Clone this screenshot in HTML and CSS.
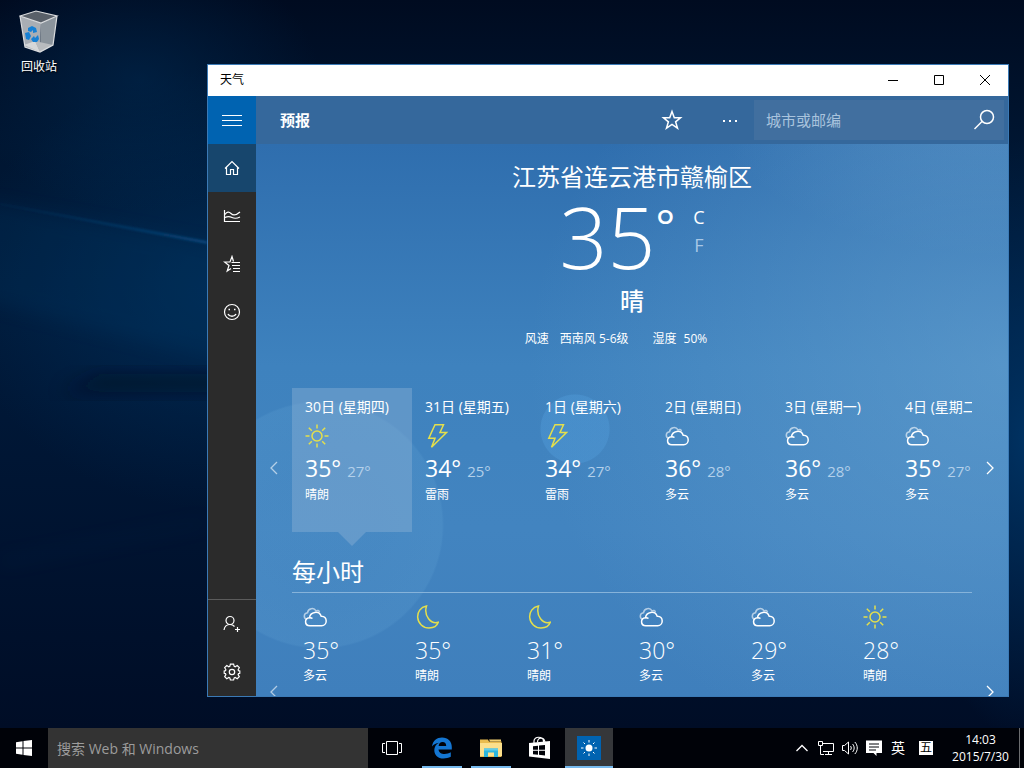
FILE: index.html
```html
<!DOCTYPE html>
<html lang="zh-CN">
<head>
<meta charset="utf-8">
<title>天气</title>
<link rel="stylesheet" href="styles.css">
</head>
<body>
<svg class="defs" aria-hidden="true">
  <symbol id="sun" viewBox="0 0 24 24"><circle cx="12" cy="12" r="5"/><path d="M12 .5v4M12 19.500v4M.5 12h4M19.500 12h4M3.800 3.800l3 3M17.200 17.200l3 3M3.800 20.200l3-3M17.200 6.800l3-3"/></symbol>
  <symbol id="bolt" viewBox="0 0 24 24"><path d="M10 .8h8.500L15 8.500h6.500L6.500 23.200l3.500-9H3.800z"/></symbol>
  <symbol id="moon" viewBox="0 0 24 24"><path d="M11.500 1C5.500 2.200 2.300 7 2.700 12.500 3.200 18.500 8 23 14 23c4.500 0 8-2 9.300-5.700C16 19.500 8.500 11 11.500 1z"/></symbol>
  <symbol id="cloud" viewBox="0 0 24 24"><path class="back" d="M4 14.500C.3 13.500.3 8.500 4.500 7.800 5 3 11 2.200 13 5.800c1.500-.8 3-.3 3.500 1.200"/><path d="M6.800 20.700c-5.500 0-5.700-7.500-.3-8 .8-6 9.500-7.500 11.700-1.500 3.300-.2 5 2 5 4.700 0 2.800-2 4.800-4.500 4.800z"/><path d="M6.500 12.700c1.300-.1 2.200.1 3 .8"/></symbol>
  <symbol id="left" viewBox="0 0 12 16"><path d="M9 2L3 8 9 14"/></symbol>
  <symbol id="right" viewBox="0 0 12 16"><path d="M3 2L9 8 3 14"/></symbol>
</svg>

<div class="desktop">
  <svg class="wallpaper" viewBox="0 0 1024 728" preserveAspectRatio="none" aria-hidden="true">
    <defs>
      <linearGradient id="beam" x1="0" x2="1"><stop offset="0" stop-color="#0a4a80" stop-opacity=".1"/><stop offset="1" stop-color="#1262a4" stop-opacity=".5"/></linearGradient>
      <filter id="soft" x="-20%" y="-50%" width="140%" height="200%"><feGaussianBlur stdDeviation="9"/></filter>
      <filter id="fine"><feGaussianBlur stdDeviation="1"/></filter>
    </defs>
    <path d="M-20 200L240 250V366L-20 300z" fill="#04406f" opacity=".2" filter="url(#soft)"/>
    <path d="M100 374h140v18H60z" fill="#000a1c" opacity=".5" filter="url(#soft)"/>
    <path d="M0 203L207 241v3L0 205z" fill="url(#beam)" filter="url(#fine)"/>
    <path d="M0 560L207 520v4L0 565z" fill="#0a3c68" opacity=".2" filter="url(#soft)"/>
  </svg>
  <button class="shortcut">
    <svg width="40" height="44" viewBox="0 0 40 44" aria-hidden="true">
      <path d="M1 7L17 2l21 5-16 7z" fill="#596069"/>
      <path d="M1 7l21 7-1 29L6 38z" fill="#a9aeb4"/>
      <path d="M22 14l16-7-4 29-13 7z" fill="#8b949c"/>
      <path d="M5 36l11-4 5 11z" fill="#d6d7d8"/><path d="M16 32l5 11 13-7z" fill="#b8bbbe"/>
      <path d="M1 7l16-5 21 5-16 7zM1 7l5 31 15 5 13-7 4-29" fill="none" stroke="#dadcde" stroke-width="1.200"/>
      <path d="M9 19l4-2 4 2 1 4-4 1 0-3-2 2-3-1zM6 24l4-1 2 4-2 4-3-1zM12 30l3-3 1 2 3-3 1 4-2 3-4 0z" fill="#1680d4"/>
    </svg>
    <span>回收站</span>
  </button>

  <section class="window" aria-label="天气">
    <header class="titlebar">
      <span class="caption">天气</span>
      <button aria-label="最小化"><svg width="12" height="12"><path d="M1 5.500h10"/></svg></button>
      <button aria-label="最大化"><svg width="12" height="12"><path d="M1.500.5h9v9h-9z"/></svg></button>
      <button aria-label="关闭"><svg width="12" height="12"><path d="M1 0l10 10M11 0L1 10"/></svg></button>
    </header>
    <div class="app">
      <nav class="rail">
        <button class="menu" aria-label="菜单"><svg width="20" height="20"><path d="M0 5.500h20M0 10.500h20M0 15.500h20"/></svg></button>
        <button class="current" aria-label="主页"><svg width="16" height="16"><path d="M1 8.500l7-7 7 7M2.500 7.500v7h4V9.500h3v5h4v-7"/></svg></button>
        <button aria-label="历史天气"><svg width="18" height="16"><path d="M1.500 2v11.500H17M2 6.500c2-3 4-3 6-1s5 2 9-1.500M2 9.500c3-1.500 5-1 7 0s5 1 8-.5"/></svg></button>
        <button aria-label="地点"><svg width="18" height="18"><path d="M10.500 6.500L9 1.500 7 7H1.500L6 10.500l-1.800 5.500L8 13.500M8.500 7.500H17M9 10.500h8M10 13.500h7M10 16.500h7"/></svg></button>
        <button aria-label="反馈"><svg width="18" height="18"><circle cx="9" cy="9" r="7.500"/><path d="M5 11c1.500 3 6.500 3 8 0M5.500 6.500h1.500M11 6.500h1.500" stroke-width="1.500"/></svg></button>
        <span class="spacer"></span>
        <div class="account">
          <button aria-label="登录"><svg width="18" height="18"><circle cx="7" cy="5.500" r="4"/><path d="M1 15c.5-3.500 2.500-5.500 6-5.500 2 0 3.500.8 4.500 2M14.500 12v5M12 14.500h5"/></svg></button>
          <button aria-label="设置"><svg width="18" height="18" viewBox="-9 -9 18 18"><circle r="2.700"/><path d="M-1.600-7.800h3.200l.6 2.200 1 .4 2-1.200 2.100 2.100-1.200 2 .4 1 1.300.2v2.300l-1.300.4-.4 1 1.200 2-2.100 2.100-2-1.200-1 .4-.6 2.100h-3.200l-.6-2.100-1-.4-2 1.200-2.100-2.100 1.200-2-.4-1-1.300-.4v-2.300l1.300-.2.4-1-1.200-2 2.100-2.100 2 1.200 1-.4z"/></svg></button>
        </div>
      </nav>
      <main class="page">
        <header class="toolbar">
          <h1>预报</h1>
          <button aria-label="收藏"><svg width="22" height="22"><path d="M11 2.500l2.300 6.300h6.200l-4.900 4 1.900 6.300L11 15.400l-5.500 3.700 1.900-6.300-4.900-4h6.200z"/></svg></button>
          <button aria-label="更多"><svg class="dots" width="16" height="16"><path d="M1 9h2M7 9h2M13 9h2"/></svg></button>
          <form class="search">
            <input type="text" placeholder="城市或邮编" aria-label="城市或邮编">
            <button type="button" aria-label="搜索"><svg width="24" height="24"><circle cx="15" cy="9" r="6.500"/><path d="M10 13.500L2.500 21"/></svg></button>
          </form>
        </header>
        <section class="now">
          <h2>江苏省连云港市赣榆区</h2>
          <div class="reading">
            <span class="degrees">35</span><span class="mark">°</span>
            <span class="units"><button>C</button><button class="off">F</button></span>
          </div>
          <p class="condition">晴</p>
          <dl class="facts"><div><dt>风速</dt><dd>西南风 5-6级</dd></div><div class="humidity"><dt>湿度</dt><dd>50%</dd></div></dl>
        </section>
        <section class="carousel daily">
          <button class="step dim" aria-label="前几天"><svg width="12" height="16"><use href="#left"/></svg></button>
          <ul>
            <li class="selected"><span class="day">30日 (星期四)</span><svg class="icon gold"><use href="#sun"/></svg><span class="temps">35°<small>27°</small></span><span class="sky">晴朗</span></li>
            <li><span class="day">31日 (星期五)</span><svg class="icon gold"><use href="#bolt"/></svg><span class="temps">34°<small>25°</small></span><span class="sky">雷雨</span></li>
            <li><span class="day">1日 (星期六)</span><svg class="icon gold"><use href="#bolt"/></svg><span class="temps">34°<small>27°</small></span><span class="sky">雷雨</span></li>
            <li><span class="day">2日 (星期日)</span><svg class="icon"><use href="#cloud"/></svg><span class="temps">36°<small>28°</small></span><span class="sky">多云</span></li>
            <li><span class="day">3日 (星期一)</span><svg class="icon"><use href="#cloud"/></svg><span class="temps">36°<small>28°</small></span><span class="sky">多云</span></li>
            <li><span class="day">4日 (星期二)</span><svg class="icon"><use href="#cloud"/></svg><span class="temps">35°<small>27°</small></span><span class="sky">多云</span></li>
          </ul>
          <button class="step" aria-label="后几天"><svg width="12" height="16"><use href="#right"/></svg></button>
        </section>
        <h2 class="heading">每小时</h2>
        <section class="carousel hourly">
          <button class="step dim" aria-label="前几小时"><svg width="12" height="16"><use href="#left"/></svg></button>
          <ul>
            <li><svg class="icon"><use href="#cloud"/></svg><span class="temps">35°</span><span class="sky">多云</span></li>
            <li><svg class="icon gold"><use href="#moon"/></svg><span class="temps">35°</span><span class="sky">晴朗</span></li>
            <li><svg class="icon gold"><use href="#moon"/></svg><span class="temps">31°</span><span class="sky">晴朗</span></li>
            <li><svg class="icon"><use href="#cloud"/></svg><span class="temps">30°</span><span class="sky">多云</span></li>
            <li><svg class="icon"><use href="#cloud"/></svg><span class="temps">29°</span><span class="sky">多云</span></li>
            <li><svg class="icon gold"><use href="#sun"/></svg><span class="temps">28°</span><span class="sky">晴朗</span></li>
          </ul>
          <button class="step" aria-label="后几小时"><svg width="12" height="16"><use href="#right"/></svg></button>
        </section>
      </main>
    </div>
  </section>
</div>

<footer class="taskbar">
  <button class="start" aria-label="开始"><svg width="16" height="16" fill="#fff"><path d="M0 2.200L6.500 1.300v6.200H0zM7.500 1.100L16 0v7.500H7.500zM0 8.500h6.500v6.200L0 13.800zM7.500 8.500H16V16l-8.500-1.100z"/></svg></button>
  <input class="find" type="text" placeholder="搜索 Web 和 Windows" aria-label="搜索 Web 和 Windows">
  <div class="tasks">
    <button aria-label="任务视图"><svg width="22" height="16" fill="none" stroke="#fff"><path d="M4.500 1.500h11v13h-11zM3 3.500H.5v9H3M17 3.500h2.500v9H17"/></svg></button>
    <button class="open" aria-label="Edge"><svg width="22" height="22" viewBox="0 0 22 22"><path d="M1 9.500C1.800 3.500 6 .5 11 .5c6 0 9.800 4 9.800 9.500v2.500H7.500c.3 3.200 3 4.500 6 4.500 2.500 0 4.300-.5 6.300-1.700v4.500C17.500 21 15 21.500 12.500 21.500 7 21.500 3.300 18 3.300 13.200c0-3.200 1.700-6 4.700-7.500C5 6 2.800 7.200 1 9.500zM7.600 9h7.600c0-2.500-1.300-3.900-3.600-3.900S7.900 6.700 7.600 9z" fill="#1476d2"/></svg></button>
    <button class="open" aria-label="文件资源管理器"><svg width="22" height="20"><path d="M0 1.500h8l1 2h12.500V19H0z" fill="#e9bc4f"/><path d="M0 5h22v13H0z" fill="#fbdf8c"/><path d="M9 1.500h12v2H10z" fill="#f3d070"/><path d="M4 10.500h14V19h-4v-4.500H8V19H4z" fill="#2bb5dc"/><path d="M4 10.500h14v2H4z" fill="#62cce8"/></svg></button>
    <button aria-label="应用商店"><svg width="22" height="24"><path d="M0 7l21-2v18L0 20.500z" fill="#fff"/><path d="M5 7V5c0-5 9-5 9.500 0v2M8.500 6.500c0-6 6.500-5.500 7.500-.5" fill="none" stroke="#fff" stroke-width="1.200"/><path d="M4 10.200l5-.5v4H4zM10 9.600l6-.6v4.700h-6zM4 14.700h5v4l-5-.5zM10 14.700h6v4.700l-6-.6z" fill="#000208"/></svg></button>
    <button class="open active" aria-label="天气"><svg width="24" height="24" viewBox="0 0 24 24"><path d="M0 0h24v24H0z" fill="#0063b1"/><circle cx="12" cy="12" r="3.500" fill="#fff"/><path d="M12 4v2.500M12 17.500V20M4 12h2.500M17.500 12H20M6.500 6.500L8 8M16 16l1.500 1.500M6.500 17.500L8 16M16 8l1.500-1.500" stroke="#fff"/></svg></button>
  </div>
  <div class="tray">
    <button aria-label="显示隐藏的图标"><svg width="16" height="16"><path d="M2.500 11L8 5.500l5.500 5.500" stroke-width="1.300"/></svg></button>
    <button aria-label="网络"><svg width="18" height="16"><path d="M6 3.500h10.500v8H6M11.500 11.500v3M8 14.500h7M1.500 1.500h4v4h-4zM3.500 6v8.500H7"/></svg></button>
    <button aria-label="音量"><svg width="18" height="16"><path d="M1.500 5.500h2l4-3.500v12l-4-3.500h-2zM9.500 6c1 1.200 1 2.800 0 4M11.500 4c2.200 2.200 2.200 5.800 0 8M13.800 2c3.300 3.300 3.300 8.700 0 12"/></svg></button>
    <button aria-label="操作中心"><svg width="18" height="18"><path d="M1 1.500h16V14h-5.500v3L8.500 14H1z" fill="#fff" stroke="none"/><path d="M4 5h10M4 8h10M4 11h7" stroke="#000208"/></svg></button>
    <button class="lang">英</button>
    <button class="ime"><span>五</span></button>
    <button class="clock"><span>14:03</span><span>2015/7/30</span></button>
    <button class="peek" aria-label="显示桌面"></button>
  </div>
</footer>
</body>
</html>
```

FILE: styles.css
```css
* { box-sizing: border-box; }
body {
  margin: 0;
  height: 100vh;
  display: flex;
  flex-direction: column;
  overflow: hidden;
  background: #00091c;
  color: #fff;
  font: 12px/16px "Open Sans", "Noto Sans CJK SC", sans-serif;
}
button, input {
  margin: 0;
  padding: 0;
  border: 0;
  background: none;
  color: inherit;
  font: inherit;
}
button { display: flex; align-items: center; justify-content: center; }
h1, h2, p, ul, dl, dd { margin: 0; padding: 0; font-weight: 400; }
ul { list-style: none; }
.defs { position: absolute; width: 0; height: 0; }

.desktop {
  position: relative;
  flex: 1;
  min-height: 0;
  background:
    radial-gradient(ellipse 180px 130px at 140px 80px, rgba(0, 48, 92, .45), transparent),
    radial-gradient(ellipse 260px 220px at 220px 290px, rgba(0, 58, 108, .5), transparent),
    radial-gradient(ellipse 120px 300px at 100% 440px, rgba(0, 56, 108, .8), transparent),
    linear-gradient(#000b20, #001632 20%, #001a3a 45%, #001330 75%, #000d26);
}
.wallpaper { position: absolute; inset: 0; width: 100%; height: 100%; }
.shortcut {
  position: absolute;
  left: 2px;
  top: 9px;
  width: 74px;
  flex-direction: column;
  gap: 6px;
  text-shadow: 1px 1px 2px #000;
}

.window {
  position: absolute;
  inset: 64px 15px 31px 207px;
  display: flex;
  flex-direction: column;
  border: 1px solid #3b7ab6;
}
.titlebar { display: flex; height: 31px; background: #fff; color: #000; }
.caption { flex: 1; padding: 7px 12px; }
.titlebar button { width: 46px; }
.titlebar svg { fill: none; stroke: #000; }
.app { flex: 1; min-height: 0; display: flex; }
.rail { display: flex; flex-direction: column; width: 48px; background: #2b2b2b; }
.rail button { width: 48px; height: 48px; }
.rail svg { fill: none; stroke: #fff; stroke-width: 1.2; }
.rail .menu { background: #0063b1; }
.rail .menu svg { stroke-width: 1; }
.rail .current { background: #17466d; }
.spacer { flex: 1; }
.account { border-top: 1px solid #5c5c5c; }

.page {
  flex: 1;
  min-width: 0;
  overflow: hidden;
  background:
    radial-gradient(circle at 319px 333px, rgba(84, 160, 222, .35) 34px, transparent 35px),
    radial-gradient(circle at 64px 429px, rgba(110, 175, 220, .12) 60px, rgba(110, 175, 220, .16) 122px, transparent 124px),
    radial-gradient(ellipse 480px 420px at 100% 45%, rgba(116, 172, 214, .45), transparent),
    radial-gradient(ellipse 300px 160px at 100% 0, rgba(116, 172, 214, .35), transparent),
    linear-gradient(#2f6eae 8%, #3e82be 45%, #4284c0 72%, #3f7fbc);
}
.toolbar { display: flex; align-items: center; height: 48px; padding-right: 4px; background: #35689c; }
.toolbar h1 { flex: 1; padding-left: 24px; font-size: 15px; line-height: 20px; font-weight: 700; }
.toolbar svg { fill: none; stroke: #fff; stroke-width: 1.5; }
.toolbar .dots { stroke-width: 2; }
.toolbar > button { width: 58px; height: 48px; }
.toolbar > button + button { margin-right: -5px; }
.search { display: flex; width: 250px; height: 40px; background: #416f9f; }
.search input { flex: 1; min-width: 0; padding-left: 12px; font-size: 15px; }
.search input::placeholder { color: #a9c3dd; opacity: 1; }
.search button { width: 40px; }

.now { display: flex; flex-direction: column; align-items: center; padding-top: 17px; }
.now h2, .condition, .heading { font-size: 24px; line-height: 32px; }
.reading { display: flex; height: 92px; padding-top: 8px; }
.degrees { font-size: 84px; line-height: 72px; font-weight: 300; }
.mark { font-size: 46px; line-height: 48px; }
.units { display: flex; flex-direction: column; margin-left: 18px; padding-top: 2px; font-size: 18px; line-height: 28px; }
.units .off { color: #a9c8e6; }
.condition { font-weight: 500; }
.facts { display: flex; gap: 24px; padding: 14px 32px 0 0; }
.facts div { display: flex; gap: 11px; }
.facts .humidity { gap: 7px; }

.carousel { display: grid; grid-template-columns: 36px minmax(0, 1fr) 36px; }
.carousel ul { display: flex; overflow: hidden; }
.carousel li { display: flex; flex-direction: column; white-space: nowrap; }
.step svg { fill: none; stroke: #fff; stroke-width: 1.3; }
.dim { opacity: .6; }
.icon { width: 24px; height: 24px; fill: none; stroke: #fff; stroke-width: 1.5; }
.icon.gold { stroke: #e4df4c; }
.back { opacity: .6; }
.temps { font-size: 23px; line-height: 32px; }
.temps small { margin-left: 6px; font-size: 15px; color: #b3d0ea; }
.daily { height: 160px; margin-top: 41px; }
.daily li { position: relative; flex: 0 0 120px; height: 144px; padding: 9px 0 0 13px; }
.day { margin-bottom: 7px; font-size: 14px; line-height: 20px; }
.daily .temps { margin-top: 4px; }
.sky { line-height: 20px; }
.daily .sky { line-height: 16px; }
.selected { background: rgba(145, 180, 216, .4); }
.selected::after {
  content: "";
  position: absolute;
  top: 100%;
  left: 46px;
  border: 14px solid transparent;
  border-top-color: rgba(145, 180, 216, .4);
  border-bottom: 0;
}
.heading { margin: 8px 36px 0; padding-bottom: 4px; border-bottom: 1px solid #86b3da; }
.hourly { height: 198px; }
.hourly li { flex: 0 0 112px; padding: 12px 0 0 11px; }
.hourly .temps { margin-top: 5px; font-weight: 300; }

.taskbar { display: flex; height: 40px; background: #000208; }
.start { width: 48px; }
.find { flex: 0 1 320px; min-width: 0; padding: 2px 0 0 9px; background: #333; font-size: 14px; }
.find::placeholder { color: #9c9c9c; opacity: 1; }
.tasks { display: flex; gap: 1px; padding-left: 1px; }
.tasks button { position: relative; width: 48px; }
.tasks .active { background: #35373a; }
.open::after {
  content: "";
  position: absolute;
  inset: auto 4px 0;
  height: 2px;
  background: #76b9ed;
}
.active::after { inset: auto 0 0; }
.tray { display: flex; margin-left: auto; }
.tray button { width: 24px; }
.tray svg { fill: none; stroke: #fff; }
.tray .lang { font-size: 14px; }
.tray .ime { width: 32px; }
.ime span { width: 14px; height: 14px; background: #fff; color: #000; line-height: 14px; }
.tray .clock { flex-direction: column; width: 77px; padding: 0 4px; line-height: 17px; }
.tray .peek { width: 5px; border-left: 1px solid #6b6d70; }
```
